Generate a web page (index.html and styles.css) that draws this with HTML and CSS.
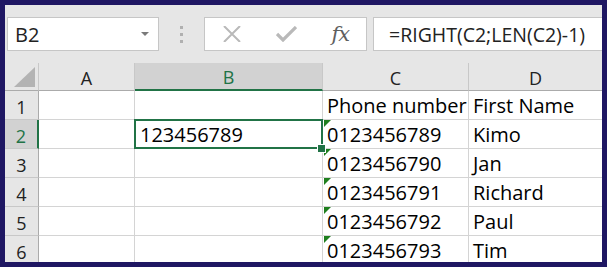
FILE: index.html
```html
<!DOCTYPE html>
<html lang="en">
<head>
    <meta charset="UTF-8">
    <title>RIGHT formula</title>
    <link rel="stylesheet" href="styles.css">
</head>
<body>

    <div class="window">

        <!-- Formula bar -->
        <div class="toolbar">
            <div class="name-box">
                <span>B2</span>
                <span class="dropdown"></span>
            </div>
            <div class="grip">
                <span></span><span></span><span></span>
            </div>
            <div class="fn-buttons">
                <svg class="icon" width="18" height="16" viewBox="0 0 18 16">
                    <path d="M1 0 L17 16 M17 0 L1 16" stroke="#b9b9b9" stroke-width="2" fill="none"/>
                </svg>
                <svg class="icon" width="21" height="16" viewBox="0 0 21 16">
                    <path d="M1 8 L7 14 L20 1" stroke="#b9b9b9" stroke-width="3.2" fill="none"/>
                </svg>
                <span class="fx">fx</span>
            </div>
            <div class="formula">=RIGHT(C2;LEN(C2)-1)</div>
        </div>

        <!-- Sheet -->
        <div class="sheet">
            <div class="hdr corner"><span class="select-all"></span></div>
            <div class="hdr col">A</div>
            <div class="hdr col active-col">B</div>
            <div class="hdr col">C</div>
            <div class="hdr col last">D</div>

            <div class="hdr row">1</div>
            <div class="cell"></div>
            <div class="cell"></div>
            <div class="cell">Phone number</div>
            <div class="cell last">First Name</div>

            <div class="hdr row active-row">2</div>
            <div class="cell"></div>
            <div class="cell selected">123456789<span class="handle"></span></div>
            <div class="cell flag">0123456789</div>
            <div class="cell last">Kimo</div>

            <div class="hdr row">3</div>
            <div class="cell"></div>
            <div class="cell"></div>
            <div class="cell flag">0123456790</div>
            <div class="cell last">Jan</div>

            <div class="hdr row">4</div>
            <div class="cell"></div>
            <div class="cell"></div>
            <div class="cell flag">0123456791</div>
            <div class="cell last">Richard</div>

            <div class="hdr row">5</div>
            <div class="cell"></div>
            <div class="cell"></div>
            <div class="cell flag">0123456792</div>
            <div class="cell last">Paul</div>

            <div class="hdr row">6</div>
            <div class="cell"></div>
            <div class="cell"></div>
            <div class="cell flag">0123456793</div>
            <div class="cell last">Tim</div>
        </div>

    </div>

</body>
</html>
```

FILE: styles.css
```css
body {
    margin: 0;
    background: #1f1763;
    font-family: "Open Sans", sans-serif;
}

.window {
    margin: 5px;
    height: 257px;
    background: #e6e6e6;
    overflow: hidden;
}

/* Formula bar */
.toolbar {
    display: flex;
    align-items: center;
    height: 58px;
    padding: 0 0 0 2px;
    box-sizing: border-box;
}

.name-box,
.fn-buttons,
.formula {
    height: 34px;
    box-sizing: border-box;
    background: #fff;
    border: 1px solid #c6c6c6;
    display: flex;
    align-items: center;
}

.name-box {
    width: 152px;
    padding: 0 9px 0 7px;
    justify-content: space-between;
    font-size: 20px;
    color: #222;
}

.dropdown {
    width: 0;
    height: 0;
    border-left: 4px solid transparent;
    border-right: 4px solid transparent;
    border-top: 4px solid #7a7a7a;
}

.grip {
    width: 45px;
    display: flex;
    flex-direction: column;
    align-items: center;
    gap: 4px;
}

.grip span {
    width: 3px;
    height: 3px;
    background: #b0b0b0;
}

.fn-buttons {
    width: 163px;
    padding: 0 17px 0 18px;
    justify-content: space-between;
}

.fx {
    font-family: "DejaVu Serif", serif;
    font-style: italic;
    font-size: 21px;
    color: #5f5f5f;
    letter-spacing: -1px;
}

.formula {
    flex: 1;
    margin-left: 6px;
    border-right: none;
    padding-left: 15px;
    font-size: 19.5px;
    color: #222;
}

/* Sheet grid */
.sheet {
    display: grid;
    grid-template-columns: 34px 96px 188px 146px 133px;
    grid-template-rows: 28px repeat(6, 29px);
    background: #fff;
}

.hdr {
    background: #e6e6e6;
    color: #222;
    font-size: 18px;
    display: flex;
    align-items: center;
    justify-content: center;
    box-sizing: border-box;
}

.corner {
    border-right: 1px solid #c8c8c8;
    border-bottom: 1px solid #ababab;
    justify-content: flex-end;
    align-items: flex-end;
    padding: 0 3px 3px 0;
}

.select-all {
    width: 0;
    height: 0;
    border-left: 21px solid transparent;
    border-bottom: 20px solid #b3b3b3;
}

.col {
    border-right: 1px solid #c8c8c8;
    border-bottom: 1px solid #ababab;
    padding-top: 2px;
}

.col.last {
    border-right: none;
}

.active-col {
    background: #d2d2d2;
    color: #217346;
    border-bottom: 2px solid #217346;
}

.row {
    border-right: 1px solid #ababab;
    border-bottom: 1px solid #c8c8c8;
    padding-top: 4px;
}

.active-row {
    background: #d2d2d2;
    color: #217346;
    border-right: 2px solid #217346;
}

.cell {
    position: relative;
    box-sizing: border-box;
    border-right: 1px solid #d4d4d4;
    border-bottom: 1px solid #d4d4d4;
    padding: 0 4px 0 4px;
    font-size: 20px;
    color: #000;
    display: flex;
    align-items: flex-end;
    line-height: 26px;
    white-space: nowrap;
}

.cell.last {
    border-right: none;
}

/* Active cell outline and fill handle */
.selected {
    padding-left: 5px;
}

.selected::after {
    content: "";
    position: absolute;
    top: -1px;
    left: -1px;
    right: -1px;
    bottom: -1px;
    border: 2px solid #217346;
}

.handle {
    position: absolute;
    right: -4px;
    bottom: -5px;
    width: 7px;
    height: 7px;
    background: #217346;
    border: 1px solid #fff;
    z-index: 2;
}

/* Green error-indicator triangle */
.flag::before {
    content: "";
    position: absolute;
    top: 0;
    left: 1px;
    border-top: 7px solid #1e7f1e;
    border-right: 7px solid transparent;
    z-index: 1;
}
```
